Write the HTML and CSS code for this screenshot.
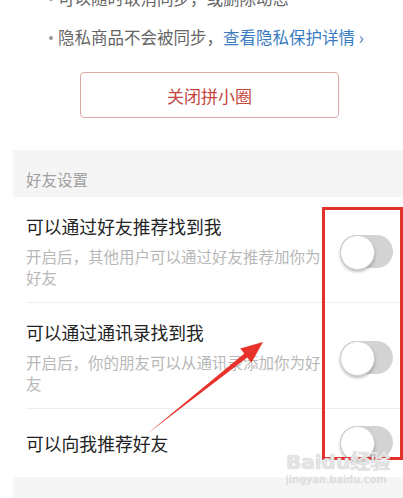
FILE: index.html
```html
<!DOCTYPE html>
<html>
   <head>
      <meta charset="UTF-8">
      <meta name="viewport" content="width=device-width, initial-scale=1.0"/>
      <title>拼小圈设置</title>
      <link rel="stylesheet" href="styles.css">
   </head>
   <body>
      <div class="intro">
         <ul class="notes">
            <li>可以随时取消同步，或删除动态</li>
            <li>隐私商品不会被同步，<a class="link" href="#">查看隐私保护详情 ›</a></li>
         </ul>
         <button class="close-btn">关闭拼小圈</button>
      </div>

      <div class="settings">
         <div class="group-title">好友设置</div>
         <div class="row">
            <div class="row-text">
               <div class="row-title">可以通过好友推荐找到我</div>
               <div class="row-desc">开启后，其他用户可以通过好友推荐加你为好友</div>
            </div>
            <span class="toggle"></span>
         </div>
         <div class="row">
            <div class="row-text">
               <div class="row-title">可以通过通讯录找到我</div>
               <div class="row-desc">开启后，你的朋友可以从通讯录添加你为好友</div>
            </div>
            <span class="toggle"></span>
         </div>
         <div class="row last">
            <div class="row-text">
               <div class="row-title">可以向我推荐好友</div>
            </div>
            <span class="toggle"></span>
         </div>
         <div class="group-title">隐私设置</div>
      </div>

      <div class="mark-box"></div>
      <svg class="mark-arrow" width="403" height="498" viewBox="0 0 403 498">
         <polygon points="147,434 247.3,357.6 251.4,362.7 263,342 240.2,348.5 244.3,353.6" fill="#e8322b"/>
      </svg>
      <div class="watermark">
         <div class="wm-logo">Bai<span class="wm-paw">du</span>经验</div>
         <div class="wm-url">jingyan.baidu.com</div>
      </div>
   </body>
</html>
```

FILE: styles.css
```css
*
{
   box-sizing: border-box;
}

body
{
   margin: 0;
   background: #ffffff;
   font-family: "Noto Sans CJK SC", "Noto Sans", sans-serif;
   overflow: hidden;
   height: 498px;
   position: relative;
}

.intro
{
   padding-bottom: 32px;
}

.notes
{
   list-style: none;
   margin: -21px 0 0 0;
   padding: 0 0 0 58px;
   font-size: 16.5px;
   line-height: 39px;
   color: #666666;
}

.notes li
{
   position: relative;
   white-space: nowrap;
}

.notes li::before
{
   content: "";
   position: absolute;
   left: -9px;
   top: 18px;
   width: 4px;
   height: 4px;
   border-radius: 50%;
   background: #9a9a9a;
}

.link
{
   color: #3a7cc0;
   text-decoration: none;
}

.close-btn
{
   display: block;
   margin: 15px 0 0 80px;
   width: 259px;
   height: 46px;
   border: 1px solid #dcaaa6;
   border-radius: 4px;
   background: #ffffff;
   color: #c4463d;
   font-family: inherit;
   font-size: 17px;
}

.settings
{
   margin-left: 13px;
   background: #ffffff;
}

.group-title
{
   background: #f5f5f5;
   color: #a0a0a0;
   font-size: 15.5px;
   line-height: 20px;
   padding: 19px 13px 8px;
}

.row
{
   display: flex;
   align-items: center;
   gap: 10px;
   margin-left: 13px;
   padding: 17px 10px 14px 0;
   border-bottom: 1px solid #eeeeee;
}

.row.last
{
   border-bottom: none;
   padding: 17px 10px 18px 0;
}

.row-text
{
   flex: 1;
}

.row-title
{
   font-size: 17.8px;
   line-height: 24px;
   color: #222222;
}

.row-desc
{
   margin-top: 8px;
   font-size: 15.5px;
   line-height: 21px;
   color: #b8b8b8;
   width: 304px;
}

.toggle
{
   flex: none;
   position: relative;
   width: 53px;
   height: 33px;
   border-radius: 17px;
   background: #d3d3d3;
}

.toggle::after
{
   content: "";
   position: absolute;
   left: 0;
   top: 0;
   width: 33px;
   height: 33px;
   border-radius: 50%;
   background: #ffffff;
   border: 1px solid #cfcfcf;
   box-shadow: 0 2px 3px rgba(0, 0, 0, 0.25);
}

.mark-box
{
   position: absolute;
   left: 322px;
   top: 207px;
   width: 81px;
   height: 253px;
   border: 3px solid #e2302a;
}

.mark-arrow
{
   position: absolute;
   left: 0;
   top: 0;
}

.watermark
{
   position: absolute;
   left: 286px;
   top: 450px;
   color: #e4e4e4;
   text-shadow: 0 0 1px #b8b8b8;
   font-family: "DejaVu Sans", "Noto Sans CJK SC", sans-serif;
}

.wm-logo
{
   font-size: 20px;
   font-weight: bold;
   line-height: 24px;
}

.wm-url
{
   font-size: 10px;
   line-height: 12px;
   letter-spacing: 0.5px;
}
```
